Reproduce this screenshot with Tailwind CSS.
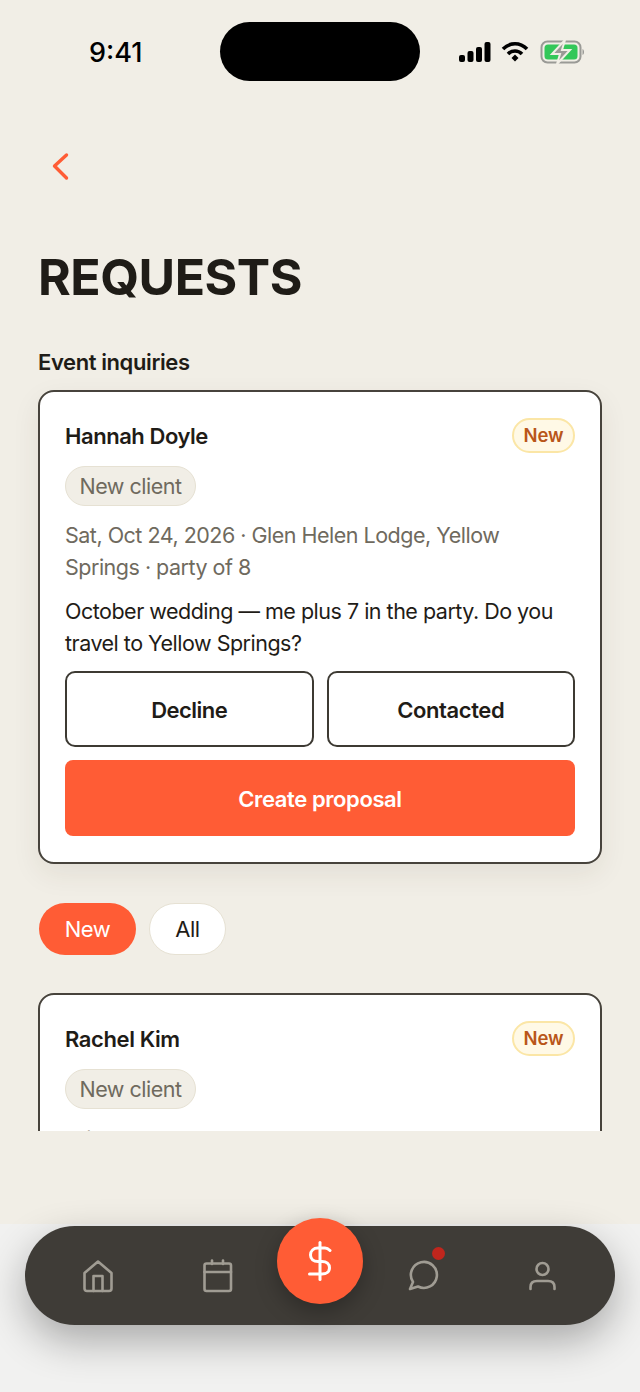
<!DOCTYPE html>
<html lang="en">
<head>
    <meta charset="UTF-8">
    <meta name="viewport" content="width=device-width, initial-scale=1.0">
    <title>Requests</title>
    <script src="https://cdn.jsdelivr.net/npm/@tailwindcss/browser@4"></script>
</head>
<body class="bg-[#f1eee6] font-['Inter',sans-serif] text-[#1f1c17]">
<div class="relative w-[640px] h-[1392px] overflow-hidden flex flex-col">

    <!-- Status bar -->
    <div class="relative h-[104px] shrink-0">
        <span class="absolute left-[89px] top-[36px] text-[27px] leading-[34px] font-medium text-black">9:41</span>
        <div class="absolute left-[220px] top-[22px] w-[200px] h-[59px] rounded-[30px] bg-black"></div>
        <svg class="absolute left-[458px] top-[41px]" width="34" height="22" viewBox="0 0 34 22" fill="#000">
            <rect x="1" y="14" width="6" height="7" rx="2"/>
            <rect x="9.500" y="10" width="6" height="11" rx="2"/>
            <rect x="18" y="6" width="6" height="15" rx="2"/>
            <rect x="26.500" y="1" width="6" height="20" rx="2"/>
        </svg>
        <svg class="absolute left-[501px] top-[40px]" width="28" height="24" viewBox="0 0 28 24" fill="none" stroke="#000" stroke-width="3.600">
            <path d="M2 9 C9 2 19 2 26 9"/>
            <path d="M7 14 C11 10 17 10 21 14"/>
            <path d="M10.500 18 L14 14.500 L17.500 18 L14 21.500 Z" fill="#000" stroke="none"/>
        </svg>
        <svg class="absolute left-[540px] top-[39px]" width="46" height="26" viewBox="0 0 46 26" fill="none">
            <rect x="1.500" y="2.500" width="39" height="21" rx="6" stroke="#9a9a96" stroke-width="2"/>
            <rect x="4.500" y="5.500" width="33" height="15" rx="3.500" fill="#33c759"/>
            <path d="M42.500 10 C43.500 10.500 44 11.500 44 13 C44 14.500 43.500 15.500 42.500 16 Z" fill="#9a9a96"/>
            <path d="M25 1 L12 15 H20 L17 25 L30 11 H22 Z" fill="#9a9a96" stroke="#f1eee6" stroke-width="2"/>
        </svg>
    </div>

    <!-- Scrolling content -->
    <div class="h-[1027px] shrink-0 overflow-hidden">
        <div class="h-[145px] pl-[50px] pt-[46px]">
            <svg width="24" height="32" viewBox="0 0 24 32" fill="none" stroke="#ff5c35" stroke-width="3.400" stroke-linecap="round" stroke-linejoin="round">
                <path d="M16.500 5 L4.500 16 L16.500 28"/>
            </svg>
        </div>
        <h1 class="px-[38px] text-[50px] leading-[56px] font-bold tracking-[-0.5px]">REQUESTS</h1>
        <h2 class="px-[38px] mt-[43px] text-[22px] leading-[28px] font-semibold tracking-[-0.4px]">Event inquiries</h2>

        <div class="mx-[38px] mt-[14px] h-[474px] rounded-[16px] border-2 border-[#47433c] bg-white px-[25px] pt-[26px] shadow-[0_10px_28px_rgba(60,50,30,0.08)]">
            <div class="flex items-center justify-between h-[36px]">
                <span class="text-[22px] font-semibold tracking-[-0.45px]">Hannah Doyle</span>
                <span class="-mt-[1px] h-[35px] w-[63px] flex items-center justify-center rounded-full border-2 border-[#fbe6a6] bg-[#fff9e6] text-[18.5px] font-semibold text-[#b9561a]">New</span>
            </div>
            <div class="mt-[12px] inline-flex h-[40px] w-[131px] justify-center items-center rounded-full border border-[#e6e1d3] bg-[#f1eee6] text-[21.5px] text-[#6f6a5e] tracking-[-0.5px]">New client</div>
            <p class="mt-[13px] text-[21.5px] leading-[32px] text-[#6f6a5e] tracking-[-0.5px]">Sat, Oct 24, 2026 · Glen Helen Lodge, Yellow Springs · party of 8</p>
            <p class="mt-[12px] text-[21.5px] leading-[32px] tracking-[-0.5px]">October wedding — me plus 7 in the party. Do you travel to Yellow Springs?</p>
            <div class="mt-[12px] grid grid-cols-2 gap-[13px]">
                <button class="h-[76px] pt-[2px] rounded-[10px] border-2 border-[#3d3a33] bg-white text-[22px] font-semibold tracking-[-0.5px]">Decline</button>
                <button class="h-[76px] pt-[2px] rounded-[10px] border-2 border-[#3d3a33] bg-white text-[22px] font-semibold tracking-[-0.4px]">Contacted</button>
            </div>
            <button class="mt-[13px] w-full h-[76px] pt-[2px] rounded-[8px] bg-[#ff5c35] text-white text-[22px] font-semibold tracking-[-0.4px]">Create proposal</button>
        </div>

        <div class="mx-[38px] mt-[39px] flex gap-[13px]">
            <span class="ml-[1px] h-[52px] w-[97px] flex items-center justify-center rounded-full bg-[#ff5c35] text-white text-[22px] tracking-[-0.5px]">New</span>
            <span class="h-[52px] w-[77px] flex items-center justify-center rounded-full bg-white border border-[#e6e1d3] text-[22px] tracking-[-0.5px]">All</span>
        </div>

        <div class="mx-[38px] mt-[38px] h-[474px] rounded-[16px] border-2 border-[#47433c] bg-white px-[25px] pt-[26px]">
            <div class="flex items-center justify-between h-[36px]">
                <span class="text-[22px] font-semibold tracking-[-0.4px]">Rachel Kim</span>
                <span class="-mt-[1px] h-[35px] w-[63px] flex items-center justify-center rounded-full border-2 border-[#fbe6a6] bg-[#fff9e6] text-[18.5px] font-semibold text-[#b9561a]">New</span>
            </div>
            <div class="mt-[12px] inline-flex h-[40px] w-[131px] justify-center items-center rounded-full border border-[#e6e1d3] bg-[#f1eee6] text-[21.5px] text-[#6f6a5e] tracking-[-0.5px]">New client</div>
            <p class="mt-[14px] text-[21.5px] leading-[32px] text-[#6f6a5e] tracking-[-0.5px]">Private event</p>
        </div>
    </div>

    <!-- Bottom area -->
    <div class="absolute left-0 right-0 top-[1224px] bottom-0 bg-[#f1f1f0]"></div>

    <!-- Tab bar -->
    <div class="absolute left-[25px] top-[1226px] w-[590px] h-[99px] rounded-[50px] bg-[#3f3c37] shadow-[0_16px_40px_rgba(0,0,0,0.3)]">
        <svg class="absolute left-[56px] top-[33px]" width="34" height="34" viewBox="0 0 34 34" fill="none" stroke="#a09c93" stroke-width="2.600" stroke-linejoin="round" stroke-linecap="round">
            <path d="M3.500 14 L17 2.500 L30.500 14 V29.500 Q30.500 32 28 32 H6 Q3.500 32 3.500 29.500 Z"/>
            <path d="M12.500 32 V17 H21.500 V32"/>
        </svg>
        <svg class="absolute left-[177px] top-[33px]" width="32" height="34" viewBox="0 0 32 34" fill="none" stroke="#a09c93" stroke-width="2.600" stroke-linejoin="round" stroke-linecap="round">
            <rect x="2.500" y="4.500" width="26.500" height="27.500" rx="2"/>
            <path d="M2.500 13 H29"/>
            <path d="M10 1.500 V5"/>
            <path d="M21 1.500 V5"/>
        </svg>
        <svg class="absolute left-[382px] top-[34px]" width="34" height="32" viewBox="0 0 34 32" fill="none" stroke="#a09c93" stroke-width="2.600" stroke-linejoin="round" stroke-linecap="round">
            <path d="M3 29 L6 22 A13 13 0 1 1 11 26.500 Z"/>
        </svg>
        <span class="absolute left-[407px] top-[21px] w-[13px] h-[13px] rounded-full bg-[#c0261d]"></span>
        <svg class="absolute left-[503px] top-[34px]" width="29" height="32" viewBox="0 0 29 32" fill="none" stroke="#a09c93" stroke-width="2.600" stroke-linecap="round">
            <circle cx="14.500" cy="9" r="6"/>
            <path d="M2.500 29 V27 C2.500 23 5 21 9 21 H20 C24 21 26.500 23 26.500 27 V29"/>
        </svg>
    </div>

    <!-- Centre action -->
    <button class="absolute left-[277px] top-[1218px] w-[86px] h-[86px] rounded-full bg-[#ff5c35] flex items-center justify-center shadow-[0_8px_22px_rgba(0,0,0,0.28)]">
        <svg width="24" height="40" viewBox="0 0 24 40" fill="none" stroke="#fff" stroke-width="3" stroke-linecap="round">
            <path d="M12 1.500 V38.500"/>
            <path d="M22 9.500 C20.500 8 19 7 17 7 H10 C5.500 7 2.500 10 2.500 14 C2.500 18 5.500 20.500 10 20.500 H14 C18.500 20.500 21.500 23 21.500 27 C21.500 30.500 18.500 33 14 33 H1.500"/>
        </svg>
    </button>
</div>
</body>
</html>
